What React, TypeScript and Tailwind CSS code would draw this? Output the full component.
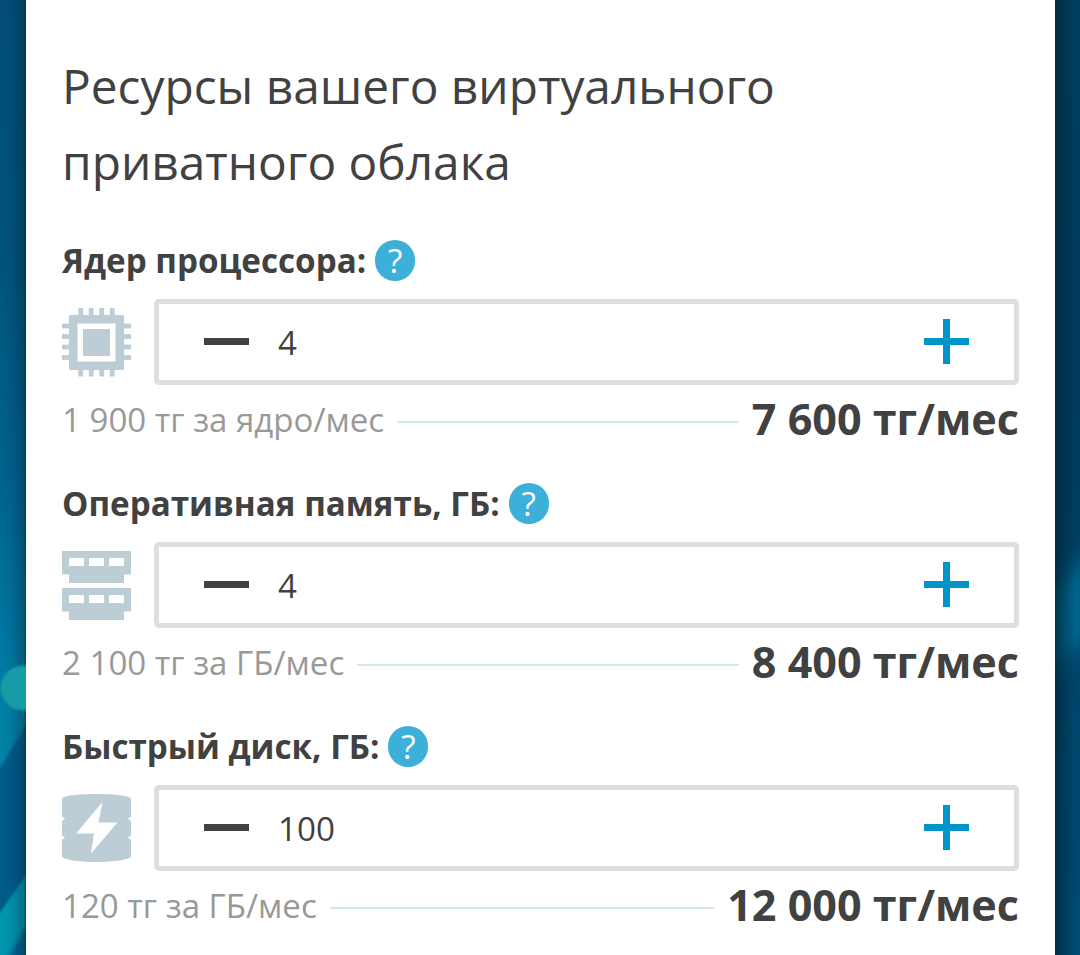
import React from "react";

const CpuIcon = () => (
  <svg width="70" height="70" viewBox="0 0 70 70" fill="#bccdd5" className="shrink-0">
    <rect x="7" y="8" width="55" height="55" rx="1.5" />
    {[18.5, 29, 39.5, 50].map((p) => (
      <g key={p}>
        <rect x={p - 2.2} y="1" width="4.8" height="68.500" />
        <rect y={p - 1.9} x="0" height="4.8" width="69" />
      </g>
    ))}
    <rect x="15.500" y="16.500" width="38" height="38" fill="#fff" />
    <rect x="21" y="22" width="27" height="27" />
  </svg>
);

const MemoryIcon = () => (
  <svg width="70" height="70" viewBox="0 0 70 70" fill="#bccdd5" className="shrink-0">
    {[1, 38].map((y) => (
      <g key={y} transform={`translate(0 ${y})`}>
        <path d="M0 0H69V23.500H62V32H7V23.500H0Z" />
        <path d="M7 7H22V15H7ZM27 7H42V15H27ZM47 7H62V15H47Z" fill="#fff" />
      </g>
    ))}
  </svg>
);

const DiskIcon = () => (
  <svg width="70" height="70" viewBox="0 0 70 70" fill="#bccdd5" className="shrink-0">
    <path d="M0 6C1 2.500 15.500 1 34.500 1S68 2.500 69 6V23.500L66 25.500L69 28V42.500L66 44.500L69 47V63.500C68 66.500 53.500 69 34.500 69S1 66.500 0 63.500V47L3 44.500L0 42.500V28L3 25.500L0 23.500Z" />
    <path d="M40.500 9L14 40.500H32L29 60.500L55.500 29.500H36.500Z" fill="#fff" />
  </svg>
);

const resources = [
  { label: "Ядер процессора:", icon: <CpuIcon />, value: "4", rate: "1 900 тг за ядро/мес", total: "7 600 тг/мес" },
  { label: "Оперативная память, ГБ:", icon: <MemoryIcon />, value: "4", rate: "2 100 тг за ГБ/мес", total: "8 400 тг/мес" },
  { label: "Быстрый диск, ГБ:", icon: <DiskIcon />, value: "100", rate: "120 тг за ГБ/мес", total: "12 000 тг/мес" },
];

const LeftBackdrop = () => (
  <svg width="26" height="955" viewBox="0 0 26 955" className="shrink-0">
    <defs>
      <linearGradient id="leftBase" x1="0" y1="0" x2="0" y2="1">
        <stop offset="0" stopColor="#004f78" />
        <stop offset=".28" stopColor="#00557d" />
        <stop offset=".5" stopColor="#00638f" />
        <stop offset=".68" stopColor="#0079a3" />
        <stop offset=".78" stopColor="#0083a8" />
        <stop offset="1" stopColor="#0083a8" />
      </linearGradient>
      <linearGradient id="leftShade">
        <stop offset="0" stopColor="#001d30" stopOpacity="0" />
        <stop offset=".4" stopColor="#001d30" stopOpacity=".06" />
        <stop offset=".9" stopColor="#001d30" stopOpacity=".32" />
        <stop offset="1" stopColor="#001d30" stopOpacity=".5" />
      </linearGradient>
      <filter id="soften" x="-20%" y="-20%" width="140%" height="140%">
        <feGaussianBlur stdDeviation="1" />
      </filter>
    </defs>
    <rect width="26" height="955" fill="url(#leftBase)" />
    <g filter="url(#soften)">
      <path d="M-5 777L31 716V870L-5 925Z" fill="#005c8b" />
      <path d="M-5 920L31 868V915L-5 975Z" fill="#0097b0" />
      <path d="M8 960L31 920V960Z" fill="#006591" />
    </g>
    <rect width="26" height="955" fill="url(#leftShade)" />
    <circle cx="23" cy="688" r="22.500" fill="#169ca6" filter="url(#soften)" />
  </svg>
);

const RightBackdrop = () => (
  <svg width="25" height="955" viewBox="0 0 25 955" className="shrink-0">
    <defs>
      <linearGradient id="rightBase" x1="0" y1="0" x2="0" y2="1">
        <stop offset="0" stopColor="#003e5e" />
        <stop offset=".35" stopColor="#003b5d" />
        <stop offset=".55" stopColor="#003d60" />
        <stop offset=".68" stopColor="#00456a" />
        <stop offset="1" stopColor="#004970" />
      </linearGradient>
      <linearGradient id="rightShade">
        <stop offset="0" stopColor="#002331" stopOpacity=".7" />
        <stop offset=".3" stopColor="#002331" stopOpacity=".4" />
        <stop offset=".8" stopColor="#002331" stopOpacity="0" />
      </linearGradient>
      <filter id="glow" filterUnits="userSpaceOnUse" x="-80" y="440" width="220" height="320">
        <feGaussianBlur stdDeviation="10" />
      </filter>
    </defs>
    <rect width="25" height="955" fill="url(#rightBase)" />
    <path d="M-40 625L70 520V615L-40 690Z" fill="#006389" filter="url(#glow)" />
    <rect width="25" height="955" fill="url(#rightShade)" />
  </svg>
);

export default function App() {
  return (
    <div className="flex h-[955px] w-[1080px] overflow-hidden bg-white font-['Open_Sans',sans-serif] text-[#414141]">
      <LeftBackdrop />
      <main className="flex w-[1029px] flex-col pt-12 pr-9 pl-9">
        <h1 className="text-[47.8px] leading-[76px]">
          Ресурсы вашего виртуального
          <br />
          приватного облака
        </h1>
        <div className="mt-10 flex flex-col">
          {resources.map((r) => (
            <section key={r.label} className="flex h-[243px] shrink-0 flex-col">
              <div className="flex h-[41px] items-center gap-[9px]">
                <h2 className="text-[33.2px] leading-[41px] font-bold whitespace-nowrap">{r.label}</h2>
                <button className="flex h-[41px] w-10 items-center justify-center rounded-full bg-[#3cb0d8] text-[33.2px] leading-none text-white">
                  ?
                </button>
              </div>
              <div className="mt-[18px] flex items-center justify-between">
                {r.icon}
                <div className="flex h-[86px] w-[865px] items-center rounded-[5px] border-[5px] border-[#dedede] pr-[45px] pl-[45px]">
                  <button className="mb-px h-[7px] w-[45px] bg-[#414141]" />
                  <span className="ml-[29px] flex-1 pt-px text-[33.2px] leading-none">{r.value}</span>
                  <svg width="45" height="45" viewBox="0 0 45 45" fill="#0095c8" className="mb-px">
                    <path d="M19 0H26V19H45V26H26V45H19V26H0V19H19Z" />
                  </svg>
                </div>
              </div>
              <div className="flex h-[70px] items-center gap-[13px] whitespace-nowrap">
                <span className="text-[33.05px] leading-none text-[#999999]">{r.rate}</span>
                <span className="mt-[4px] h-[2px] flex-1 bg-[#d5e8ea]" />
                <strong className="-mt-[2px] text-[43.1px] leading-none font-bold">{r.total}</strong>
              </div>
            </section>
          ))}
        </div>
      </main>
      <RightBackdrop />
    </div>
  );
}
